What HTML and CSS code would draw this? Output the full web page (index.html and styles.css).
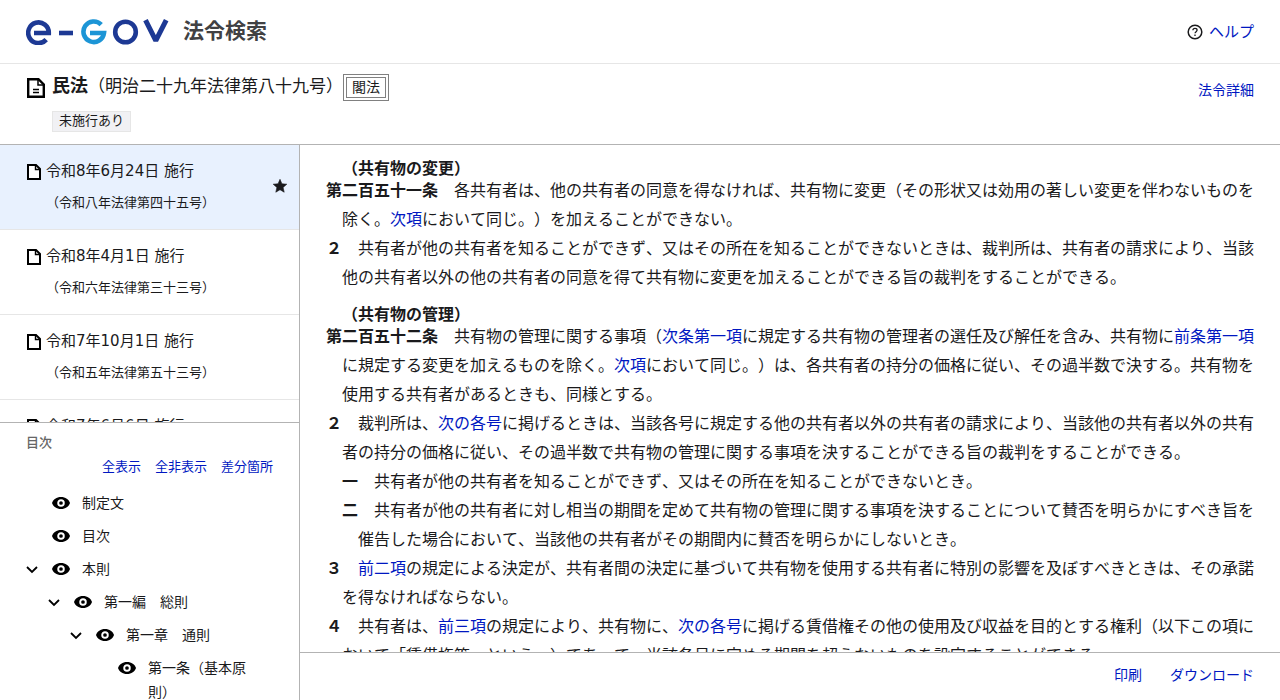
FILE: index.html
```html
<!DOCTYPE html>
<html lang="ja">
<head>
    <meta charset="UTF-8">
    <meta name="viewport" content="width=device-width, initial-scale=1.0">
    <title>民法 | e-Gov 法令検索</title>
    <link rel="stylesheet" href="styles.css">
</head>
<body>
    <svg class="sprite" aria-hidden="true">
        <symbol id="icon-file" viewBox="0 0 14 16">
            <path d="M1 1h8l4 4v10H1z" fill="#fff" stroke="#000" stroke-width="2"/>
            <path d="M8.500 1v4.500H13" fill="none" stroke="#000" stroke-width="1.400"/>
        </symbol>
        <symbol id="icon-eye" viewBox="0 0 18 12">
            <path d="M9 0C4.500 0 1.200 2.500 0 6c1.200 3.500 4.500 6 9 6s7.800-2.500 9-6c-1.200-3.500-4.500-6-9-6z"/>
            <circle cx="9" cy="6" r="2.800" fill="none" stroke="#fff" stroke-width="1.900"/>
        </symbol>
        <symbol id="icon-chevron" viewBox="0 0 12 8">
            <path d="M1 1l5 5 5-5" fill="none" stroke="#000" stroke-width="1.800"/>
        </symbol>
    </svg>

    <header class="header">
        <a class="brand" href="#">
            <svg class="logo" viewBox="0 0 143 26" role="img" aria-label="e-Gov">
                <g fill="none" stroke-width="4.600">
                    <path d="M20.200 20.600A10.300 10.300 0 1 1 22.800 14H8" stroke="#1d3994"/>
                    <path d="M33 14h14" stroke="#1d3994"/>
                    <path d="M75.200 5.600A10.300 10.300 0 1 0 78 14H64" stroke="#1c95d6"/>
                    <circle cx="99.500" cy="13" r="10.300" stroke="#1d3994"/>
                    <path d="M119.500 1.200l10.300 20.500L140.200 1.200" stroke="#1d3994" stroke-width="5" stroke-linejoin="bevel"/>
                </g>
            </svg>
            <span class="brand-name">法令検索</span>
        </a>
        <a class="help" href="#">
            <svg class="help-icon" viewBox="0 0 16 16" aria-hidden="true">
                <circle cx="8" cy="8" r="6.800" fill="none" stroke="#1a1a1c" stroke-width="1.500"/>
                <path d="M5.900 6.300c0-1.200.9-2 2.100-2s2.100.8 2.100 1.800c0 1.500-2 1.600-2 3.200M8 10.500v1.500" fill="none" stroke="#1a1a1c" stroke-width="1.300"/>
            </svg>
            ヘルプ
        </a>
    </header>

    <section class="law">
        <svg class="law-icon" viewBox="0 0 18 20" aria-hidden="true">
            <path d="M1.200 1.200h10.300l5.300 5.300v12.300H1.200z" fill="#fff" stroke="#000" stroke-width="2.400"/>
            <path d="M11 1.500v5.500h5.500" fill="none" stroke="#000" stroke-width="1.500"/>
            <path d="M6 11.500h6M6 14.500h6" stroke="#000" stroke-width="1.300"/>
        </svg>
        <div class="law-info">
            <div class="law-heading">
                <h1 class="law-title">民法</h1>
                <span class="law-number">（明治二十九年法律第八十九号）</span>
                <span class="law-type">閣法</span>
            </div>
            <span class="badge">未施行あり</span>
        </div>
        <a class="law-detail" href="#">法令詳細</a>
    </section>

    <div class="content">
        <aside class="sidebar">
            <ul class="revisions">
                <li class="revision active">
                    <svg class="file-icon"><use href="#icon-file"/></svg>
                    <div>
                        <p class="revision-date">令和8年6月24日 施行</p>
                        <p class="revision-law">（令和八年法律第四十五号）</p>
                    </div>
                    <svg class="star" viewBox="0 0 14 14" aria-label="選択中">
                        <path d="M7 .3l1.900 4.500 4.900.4-3.700 3.200 1.100 4.800L7 10.700l-4.200 2.500 1.100-4.800L.2 5.200l4.900-.4z" fill="#1a1a1c" stroke="#1a1a1c" stroke-width=".6" stroke-linejoin="round"/>
                    </svg>
                </li>
                <li class="revision">
                    <svg class="file-icon"><use href="#icon-file"/></svg>
                    <div>
                        <p class="revision-date">令和8年4月1日 施行</p>
                        <p class="revision-law">（令和六年法律第三十三号）</p>
                    </div>
                </li>
                <li class="revision">
                    <svg class="file-icon"><use href="#icon-file"/></svg>
                    <div>
                        <p class="revision-date">令和7年10月1日 施行</p>
                        <p class="revision-law">（令和五年法律第五十三号）</p>
                    </div>
                </li>
                <li class="revision">
                    <svg class="file-icon"><use href="#icon-file"/></svg>
                    <div>
                        <p class="revision-date">令和7年6月6日 施行</p>
                    </div>
                </li>
            </ul>

            <nav class="toc">
                <h2 class="toc-title">目次</h2>
                <div class="toc-actions">
                    <a href="#">全表示</a>
                    <a href="#">全非表示</a>
                    <a href="#">差分箇所</a>
                </div>
                <ul class="tree">
                    <li>
                        <div class="node">
                            <span class="toggle"></span>
                            <svg class="eye"><use href="#icon-eye"/></svg>
                            <span>制定文</span>
                        </div>
                    </li>
                    <li>
                        <div class="node">
                            <span class="toggle"></span>
                            <svg class="eye"><use href="#icon-eye"/></svg>
                            <span>目次</span>
                        </div>
                    </li>
                    <li>
                        <div class="node">
                            <button class="toggle" type="button" aria-label="本則を閉じる"><svg class="chevron"><use href="#icon-chevron"/></svg></button>
                            <svg class="eye"><use href="#icon-eye"/></svg>
                            <span>本則</span>
                        </div>
                        <ul class="subtree">
                            <li>
                                <div class="node">
                                    <button class="toggle" type="button" aria-label="第一編を閉じる"><svg class="chevron"><use href="#icon-chevron"/></svg></button>
                                    <svg class="eye"><use href="#icon-eye"/></svg>
                                    <span>第一編　総則</span>
                                </div>
                                <ul class="subtree">
                                    <li>
                                        <div class="node">
                                            <button class="toggle" type="button" aria-label="第一章を閉じる"><svg class="chevron"><use href="#icon-chevron"/></svg></button>
                                            <svg class="eye"><use href="#icon-eye"/></svg>
                                            <span>第一章　通則</span>
                                        </div>
                                        <ul class="subtree">
                                            <li>
                                                <div class="node">
                                                    <span class="toggle"></span>
                                                    <svg class="eye"><use href="#icon-eye"/></svg>
                                                    <span>第一条（基本原則）</span>
                                                </div>
                                            </li>
                                        </ul>
                                    </li>
                                </ul>
                            </li>
                        </ul>
                    </li>
                </ul>
            </nav>
        </aside>

        <main class="main">
            <div class="provisions">
                <article class="article">
                    <h3 class="caption">（共有物の変更）</h3>
                    <p class="paragraph"><b>第二百五十一条</b>　各共有者は、他の共有者の同意を得なければ、共有物に変更（その形状又は効用の著しい変更を伴わないものを除く。<a href="#">次項</a>において同じ。）を加えることができない。</p>
                    <p class="paragraph"><b>２</b>　共有者が他の共有者を知ることができず、又はその所在を知ることができないときは、裁判所は、共有者の請求により、当該他の共有者以外の他の共有者の同意を得て共有物に変更を加えることができる旨の裁判をすることができる。</p>
                </article>

                <article class="article">
                    <h3 class="caption">（共有物の管理）</h3>
                    <p class="paragraph"><b>第二百五十二条</b>　共有物の管理に関する事項（<a href="#">次条第一項</a>に規定する共有物の管理者の選任及び解任を含み、共有物に<a href="#">前条第一項</a>に規定する変更を加えるものを除く。<a href="#">次項</a>において同じ。）は、各共有者の持分の価格に従い、その過半数で決する。共有物を使用する共有者があるときも、同様とする。</p>
                    <p class="paragraph"><b>２</b>　裁判所は、<a href="#">次の各号</a>に掲げるときは、当該各号に規定する他の共有者以外の共有者の請求により、当該他の共有者以外の共有者の持分の価格に従い、その過半数で共有物の管理に関する事項を決することができる旨の裁判をすることができる。</p>
                    <p class="paragraph item"><b>一</b>　共有者が他の共有者を知ることができず、又はその所在を知ることができないとき。</p>
                    <p class="paragraph item"><b>二</b>　共有者が他の共有者に対し相当の期間を定めて共有物の管理に関する事項を決することについて賛否を明らかにすべき旨を催告した場合において、当該他の共有者がその期間内に賛否を明らかにしないとき。</p>
                    <p class="paragraph"><b>３</b>　<a href="#">前二項</a>の規定による決定が、共有者間の決定に基づいて共有物を使用する共有者に特別の影響を及ぼすべきときは、その承諾を得なければならない。</p>
                    <p class="paragraph"><b>４</b>　共有者は、<a href="#">前三項</a>の規定により、共有物に、<a href="#">次の各号</a>に掲げる賃借権その他の使用及び収益を目的とする権利（以下この項において「賃借権等」という。）であって、当該各号に定める期間を超えないものを設定することができる。</p>
                </article>
            </div>
            <footer class="actions">
                <a href="#">印刷</a>
                <a href="#">ダウンロード</a>
            </footer>
        </main>
    </div>
</body>
</html>
```

FILE: styles.css
```css
* {
    margin: 0;
    padding: 0;
    box-sizing: border-box;
}

body {
    display: flex;
    flex-direction: column;
    height: 100vh;
    overflow: hidden;
    font-family: "DejaVu Sans", "Noto Sans CJK JP", sans-serif;
    font-size: 14px;
    line-height: 24px;
    font-kerning: none;
    color: #1a1a1c;
    background: #fff;
    text-spacing-trim: space-all;
}

a {
    color: #0017c1;
    text-decoration: none;
}

ul {
    list-style: none;
}

svg {
    flex: none;
    display: block;
}

.sprite {
    position: absolute;
    width: 0;
    height: 0;
}

/* header */
.header {
    display: flex;
    align-items: center;
    justify-content: space-between;
    height: 64px;
    padding: 0 26px;
    border-bottom: 1px solid #e6e6e6;
}

.brand {
    display: flex;
    align-items: center;
    gap: 14px;
}

.logo {
    width: 143px;
    height: 26px;
}

.brand-name {
    padding-bottom: 2px;
    font-size: 21px;
    font-weight: bold;
    color: #414143;
}

.help {
    display: flex;
    align-items: center;
    gap: 6px;
    font-size: 15px;
}

.help-icon {
    width: 16px;
    height: 16px;
}

/* law title */
.law {
    display: flex;
    align-items: flex-start;
    padding: 10px 26px 12px;
    border-bottom: 1px solid #b3b3b3;
}

.law-icon {
    width: 18px;
    height: 20px;
    margin: 4px 7px 0 1px;
}

.law-info {
    display: flex;
    flex-direction: column;
    align-items: flex-start;
    flex: 1;
    gap: 10px;
}

.law-heading {
    display: flex;
    align-items: flex-start;
}

.law-title {
    font-size: 18px;
}

.law-number {
    font-size: 17px;
}

.law-type {
    padding: 0 5px 1px;
    border: 4px double #808080;
    line-height: 18px;
}

.badge {
    padding: 0 6px 1px;
    border: 1px solid #e6e6e6;
    background: #f1f1f4;
    font-size: 13px;
    line-height: 18px;
}

.law-detail {
    padding-top: 4px;
}

/* sidebar */
.content {
    display: flex;
    flex: 1;
    min-height: 0;
}

.sidebar {
    display: flex;
    flex-direction: column;
    flex: none;
    width: 300px;
    border-right: 1px solid #b3b3b3;
}

.revisions {
    height: 50%;
    overflow: hidden;
    border-bottom: 1px solid #b3b3b3;
}

.revision {
    display: flex;
    align-items: flex-start;
    height: 85px;
    padding: 14px 12px 0 27px;
    border-bottom: 1px solid #e6e6e6;
}

.revision.active {
    background: #e8f1fe;
}

.file-icon {
    width: 14px;
    height: 16px;
    margin: 5px 5px 0 0;
}

.revision-date {
    font-size: 15px;
    margin-bottom: 8px;
}

.revision-law {
    font-size: 13px;
}

.star {
    width: 14px;
    height: 14px;
    margin: 20px 0 0 auto;
}

.toc {
    flex: 1;
    min-height: 0;
    overflow: hidden;
    padding: 8px 26px 0;
}

.toc-title {
    font-size: 13px;
    color: #666;
    font-weight: 500;
}

.toc-actions {
    display: flex;
    justify-content: flex-end;
    gap: 14px;
    margin-bottom: 8px;
    font-size: 13px;
}

.node {
    display: flex;
    align-items: flex-start;
    padding: 4px 0 5px;
}

.subtree {
    padding-left: 22px;
}

.toggle {
    flex: none;
    width: 26px;
    height: 24px;
    padding-top: 2px;
    border: 0;
    background: none;
}

.chevron {
    width: 12px;
    height: 8px;
}

.eye {
    width: 18px;
    height: 12px;
    margin: 6px 12px 0 0;
}

/* provisions */
.main {
    display: flex;
    flex-direction: column;
    flex: 1;
    min-width: 0;
}

.provisions {
    flex: 1;
    min-height: 0;
    overflow: hidden;
    padding: 17px 24px 0 26px;
    font-size: 16px;
    line-height: 29px;
}

.article {
    margin-bottom: 16px;
}

.caption {
    padding-left: 16px;
    font-size: 16px;
    line-height: 14px;
}

.paragraph {
    padding-left: 16px;
    text-indent: -16px;
}

.item {
    padding-left: 32px;
}

.actions {
    display: flex;
    align-items: center;
    justify-content: flex-end;
    gap: 28px;
    height: 48px;
    padding: 0 26px 3px;
    border-top: 1px solid #b3b3b3;
}
```
